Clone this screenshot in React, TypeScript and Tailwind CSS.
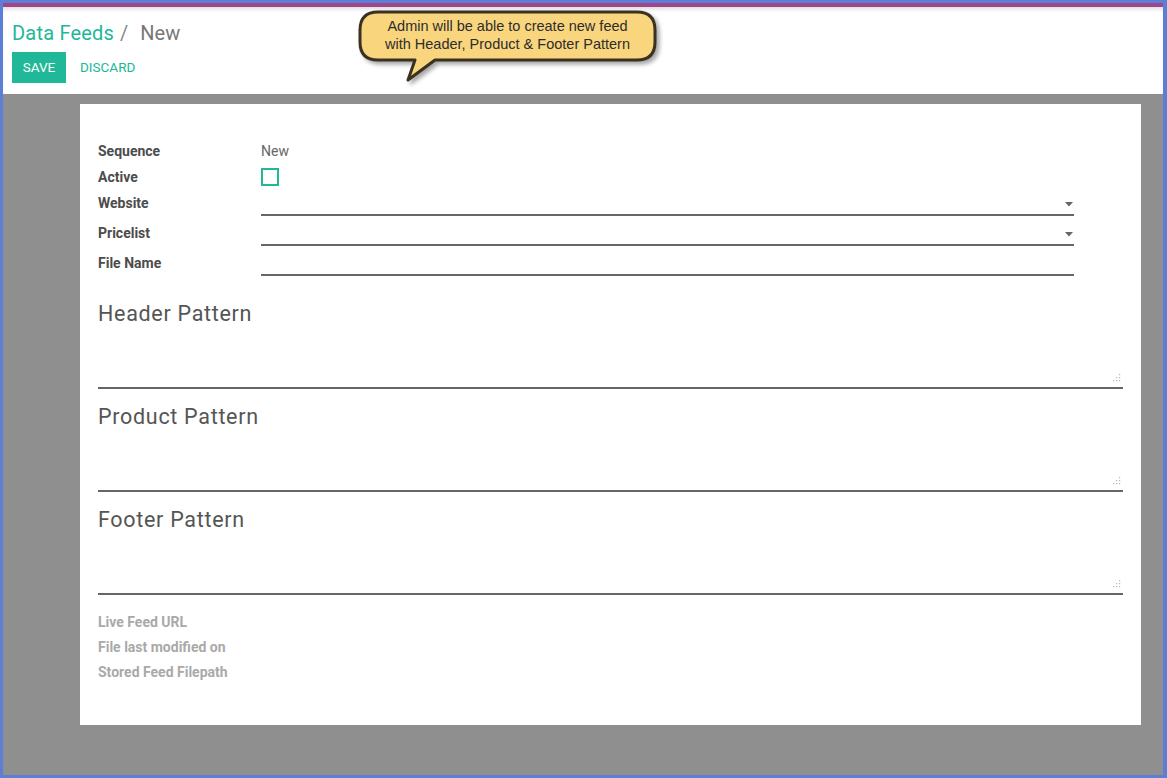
const Caret = () => (
  <svg width="8" height="5" viewBox="0 0 8 5" className="absolute right-[1px] top-[12px]">
    <path d="M0 0 H8 L4 4.5 Z" fill="#666" />
  </svg>
);

const Grip = () => (
  <svg width="8" height="8" viewBox="0 0 8 8" className="absolute right-[2px] bottom-[5px]">
    <g fill="#b5b5b5">
      <rect x="6" y="0" width="1.2" height="1.2" />
      <rect x="3" y="3" width="1.2" height="1.2" />
      <rect x="6" y="3" width="1.2" height="1.2" />
      <rect x="0" y="6" width="1.2" height="1.2" />
      <rect x="3" y="6" width="1.2" height="1.2" />
      <rect x="6" y="6" width="1.2" height="1.2" />
    </g>
  </svg>
);

const FieldRow = ({ label, select }: { label: string; select?: boolean }) => (
  <div className="flex h-[30px]">
    <div className="w-[163px] h-[26px] leading-[26px] font-bold text-[14px] text-[#4c4c4c]">{label}</div>
    <div className="relative w-[813px] h-[26px] border-b-2 border-[#666]">{select && <Caret />}</div>
  </div>
);

const PatternBlock = ({ title, first }: { title: string; first?: boolean }) => (
  <div className={first ? "mt-[20px]" : "mt-[14px]"}>
    <h2 className="text-[21.5px] leading-[28px] tracking-[0.7px] text-[#555]">{title}</h2>
    <div className="relative h-[61px] border-b-2 border-[#666]">
      <Grip />
    </div>
  </div>
);

const Callout = () => (
  <div className="absolute left-[355px] top-[8px] w-[310px] h-[82px]">
    <svg width="310" height="82" viewBox="0 0 310 82" className="absolute inset-0" style={{ filter: "drop-shadow(3px 3px 2px rgba(0,0,0,0.35))" }}>
      <path
        d="M23 4 H282 Q300 4 300 22 V34 Q300 52 282 52 H80 L53 72 L60 52 H23 Q5 52 5 34 V22 Q5 4 23 4 Z"
        fill="#f9d57e"
        stroke="#3a3120"
        strokeWidth="3"
        strokeLinejoin="round"
      />
    </svg>
    <div className="absolute left-[5px] top-[9px] w-[295px] text-center text-[14.5px] leading-[18px] text-[#2d2d2d] font-['Liberation_Sans',Arial,sans-serif]">
      Admin will be able to create new feed
      <br />
      with Header, Product &amp; Footer Pattern
    </div>
  </div>
);

export default function App() {
  return (
    <div className="relative w-[1167px] h-[778px] bg-[#5a7fd5] pt-[3px] pl-[3px] pr-[4px] pb-[3px] font-['Roboto',sans-serif]">
      <div className="flex flex-col h-full">
        <div className="h-[4px] bg-[#a1468a]" />
        <header className="h-[87px] bg-white pl-[9px] pt-[12px] shadow-[inset_0_4px_4px_-2px_rgba(0,0,0,0.15)]">
          <div className="flex items-center h-[28px] text-[20px]">
            <span className="text-[#21b799] tracking-[0.2px]">Data Feeds</span>
            <span className="text-[#888] ml-[6px]">/</span>
            <span className="text-[#777] ml-[12px]">New</span>
          </div>
          <div className="flex items-center mt-[5px] gap-[14px]">
            <button className="h-[31px] w-[54px] bg-[#21b799] text-white text-[13.5px]">SAVE</button>
            <button className="text-[13.5px] text-[#21b799]">DISCARD</button>
          </div>
        </header>
        <main className="flex-1 bg-[#8f8f8f] pt-[10px] pl-[77px]">
          <div className="w-[1061px] h-[621px] bg-white pt-[34px] pl-[18px] pr-[18px]">
            <div className="flex h-[26px] items-center">
              <div className="w-[163px] font-bold text-[14px] text-[#4c4c4c]">Sequence</div>
              <div className="text-[14px] text-[#666]">New</div>
            </div>
            <div className="flex h-[26px] items-center">
              <div className="w-[163px] font-bold text-[14px] text-[#4c4c4c]">Active</div>
              <div className="w-[18px] h-[18px] border-2 border-[#21b799]" />
            </div>
            <FieldRow label="Website" select />
            <FieldRow label="Pricelist" select />
            <FieldRow label="File Name" />
            <PatternBlock title="Header Pattern" first />
            <PatternBlock title="Product Pattern" />
            <PatternBlock title="Footer Pattern" />
            <div className="mt-[15px] text-[14px] font-bold text-[#a9a9a9]">
              <div className="h-[25px] leading-[25px]">Live Feed URL</div>
              <div className="h-[25px] leading-[25px]">File last modified on</div>
              <div className="h-[25px] leading-[25px]">Stored Feed Filepath</div>
            </div>
          </div>
        </main>
      </div>
      <Callout />
    </div>
  );
}
